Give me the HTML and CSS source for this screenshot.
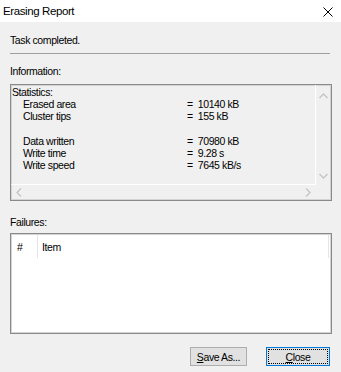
FILE: index.html
```html
<!DOCTYPE html>
<html lang="en">
<head>
    <meta charset="UTF-8">
    <title>Erasing Report</title>
    <link rel="stylesheet" href="styles.css">
</head>
<body>

    <div class="window">
        <!-- title bar -->
        <div class="titlebar">
            <span class="title">Erasing Report</span>
            <svg class="close-x" width="10" height="10" viewBox="0 0 10 10">
                <path d="M0.5 0.5 L9.5 9.5 M9.5 0.5 L0.5 9.5" stroke="#000" stroke-width="1" fill="none"/>
            </svg>
        </div>

        <div class="dialog">
            <div class="status">Task completed.</div>
            <div class="separator"></div>

            <div class="label info-label">Information:</div>
            <div class="info-box">
                <div class="info-text">
                    <div class="row">Statistics:</div>
                    <div class="row stat"><span class="key">Erased area</span><span class="val">=&nbsp; 10140 kB</span></div>
                    <div class="row stat"><span class="key">Cluster tips</span><span class="val">=&nbsp; 155 kB</span></div>
                    <div class="row"></div>
                    <div class="row stat"><span class="key">Data written</span><span class="val">=&nbsp; 70980 kB</span></div>
                    <div class="row stat"><span class="key">Write time</span><span class="val">=&nbsp; 9.28 s</span></div>
                    <div class="row stat"><span class="key">Write speed</span><span class="val">=&nbsp; 7645 kB/s</span></div>
                </div>
                <div class="vscroll">
                    <svg width="9" height="6" viewBox="0 0 9 6"><polyline points="0.5,5 4.5,1 8.5,5" stroke="#c4c4c4" stroke-width="1.3" fill="none"/></svg>
                    <svg width="9" height="6" viewBox="0 0 9 6"><polyline points="0.5,1 4.5,5 8.5,1" stroke="#c4c4c4" stroke-width="1.3" fill="none"/></svg>
                </div>
                <div class="hscroll">
                    <svg width="6" height="9" viewBox="0 0 6 9"><polyline points="5,0.5 1,4.5 5,8.5" stroke="#c4c4c4" stroke-width="1.3" fill="none"/></svg>
                    <svg width="6" height="9" viewBox="0 0 6 9"><polyline points="1,0.5 5,4.5 1,8.5" stroke="#c4c4c4" stroke-width="1.3" fill="none"/></svg>
                </div>
                <div class="corner"></div>
            </div>

            <div class="label fail-label">Failures:</div>
            <div class="list-box">
                <div class="list-header">
                    <div class="col col-num">#</div>
                    <div class="col col-item">Item</div>
                </div>
            </div>

            <div class="buttons">
                <button class="btn btn-save"><u>S</u>ave As...</button>
                <button class="btn btn-close"><span class="focus"><u>C</u>lose</span></button>
            </div>
        </div>
    </div>

</body>
</html>
```

FILE: styles.css
```css
body {
    margin: 0;
    padding: 0;
    background: #f0f0f0;
    font-family: "Liberation Sans", Arial, sans-serif;
    font-size: 10.5px;
    letter-spacing: -0.4px;
    color: #000;
}
.window {
    width: 341px;
    height: 372px;
    overflow: hidden;
}
.titlebar {
    height: 22px;
    background: #fff;
    display: flex;
    align-items: center;
    justify-content: space-between;
    padding: 0 8px 0 3px;
}
.title {
    font-size: 11.5px;
}
.close-x {
    margin-top: 1px;
}
.dialog {
    padding: 0 9px 0 10px;
    line-height: 12px;
}
.status {
    margin-top: 12px;
}
.separator {
    margin-top: 7px;
    width: 320px;
    border-top: 1px solid #a0a0a0;
}
.info-label {
    margin-top: 11px;
}
.info-box {
    margin-top: 7px;
    height: 117px;
    box-sizing: border-box;
    border: 1px solid #8a8a8a;
    box-shadow: inset 0 0 0 1px #d4d4d4;
    background: #f0f0f0;
    display: grid;
    grid-template-columns: 1fr 15px;
    grid-template-rows: 1fr 15px;
}
.info-text {
    border-right: 1px solid #fff;
    border-bottom: 1px solid #fff;
    padding: 1px 0 0 1px;
    overflow: hidden;
}
.row {
    height: 12.2px;
    white-space: nowrap;
}
.stat {
    display: flex;
    padding-left: 11px;
}
.key {
    width: 164px;
}
.vscroll {
    display: flex;
    flex-direction: column;
    justify-content: space-between;
    align-items: center;
    padding: 8px 0 6px 0;
}
.hscroll {
    display: flex;
    justify-content: space-between;
    align-items: center;
    padding: 0 5px 0 5px;
}
.fail-label {
    margin-top: 15px;
}
.list-box {
    margin-top: 5px;
    height: 101px;
    box-sizing: border-box;
    border: 1px solid #8a8a8a;
    box-shadow: inset 0 0 0 1px #d4d4d4;
    background: #fff;
    padding: 1px 2px 0 1px;
}
.list-header {
    display: flex;
    height: 23px;
}
.col {
    display: flex;
    align-items: center;
}
.col-num {
    width: 26px;
    padding-left: 5px;
    box-sizing: border-box;
    border-right: 1px solid #e5e5e5;
}
.col-item {
    flex: 1;
    padding-left: 4px;
    border-right: 1px solid #e5e5e5;
}
.buttons {
    margin-top: 13px;
    display: flex;
    justify-content: flex-end;
    gap: 19px;
    padding-right: 2px;
}
.btn {
    height: 19px;
    box-sizing: border-box;
    font-family: "Liberation Sans", Arial, sans-serif;
    font-size: 10.5px;
    letter-spacing: -0.4px;
    background: #e1e1e1;
    border: 1px solid #adadad;
    padding: 0;
    color: #000;
}
.btn-save {
    width: 57px;
}
.btn-close {
    width: 64px;
    border-color: #0078d7;
    padding: 1px;
}
.focus {
    display: flex;
    align-items: center;
    justify-content: center;
    height: 100%;
    box-sizing: border-box;
    border: 1px dotted #000;
}
```
